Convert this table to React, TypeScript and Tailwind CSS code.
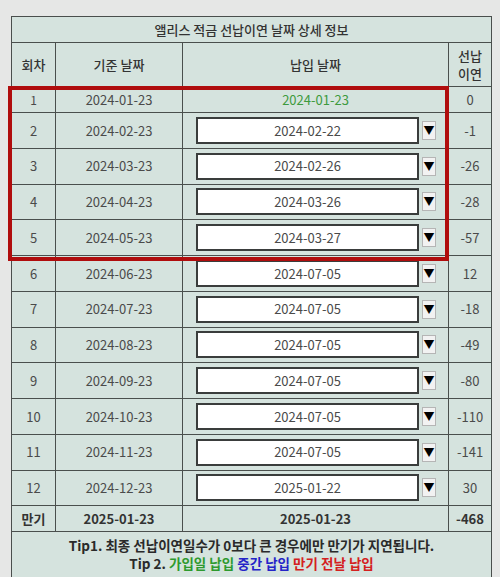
import React from "react";

const rows: [number, string, string, string][] = [
  [2, "2024-02-23", "2024-02-22", "-1"],
  [3, "2024-03-23", "2024-02-26", "-26"],
  [4, "2024-04-23", "2024-03-26", "-28"],
  [5, "2024-05-23", "2024-03-27", "-57"],
  [6, "2024-06-23", "2024-07-05", "12"],
  [7, "2024-07-23", "2024-07-05", "-18"],
  [8, "2024-08-23", "2024-07-05", "-49"],
  [9, "2024-09-23", "2024-07-05", "-80"],
  [10, "2024-10-23", "2024-07-05", "-110"],
  [11, "2024-11-23", "2024-07-05", "-141"],
  [12, "2024-12-23", "2025-01-22", "30"],
];

const cell = "border border-[#4a4f4d] text-center p-0";

export default function App() {
  return (
    <div
      className="w-[500px] h-[577px] bg-[#e6e7e6] pt-[16px] pl-[11px] overflow-hidden text-[13px] text-[#4a4a4a]"
      style={{ fontFamily: '"Noto Sans CJK KR", "Noto Sans", sans-serif' }}
    >
      <div className="relative w-[480px]">
        <table className="border-collapse bg-[#d5e3de] w-[480px] table-fixed">
          <colgroup>
            <col className="w-[44px]" />
            <col className="w-[127px]" />
            <col className="w-[266px]" />
            <col className="w-[43px]" />
          </colgroup>
          <tbody>
            <tr className="h-[26px]">
              <td colSpan={4} className={`${cell} text-[#333] font-medium`}>
                앨리스 적금 선납이연 날짜 상세 정보
              </td>
            </tr>
            <tr className="h-[44px]">
              <td className={`${cell} text-[#333] font-medium`}>회차</td>
              <td className={`${cell} text-[#333] font-medium`}>기준 날짜</td>
              <td className={`${cell} text-[#333] font-medium`}>납입 날짜</td>
              <td className={`${cell} text-[#333] font-medium leading-[18px]`}>
                선납
                <br />
                이연
              </td>
            </tr>
            <tr className="h-[26px]">
              <td className={`${cell} text-[12px]`}>1</td>
              <td className={cell}>2024-01-23</td>
              <td className={`${cell} text-[#3d9a3d]`}>2024-01-23</td>
              <td className={cell}>0</td>
            </tr>
            {rows.map(([n, base, pay, diff]) => (
              <tr key={n} className="h-[35.75px]">
                <td className={cell}>{n}</td>
                <td className={cell}>{base}</td>
                <td className={cell}>
                  <div className="flex items-center justify-center gap-[3px] pl-[1px]">
                    <div className="w-[223px] h-[27px] bg-white border-2 border-[#3a3d3c] flex items-center justify-center text-[#4a4a4a]">
                      {pay}
                    </div>
                    <div className="w-[14px] h-[19px] bg-[#f2f2f2] border border-[#b5b5b5] flex items-center justify-center text-[11px] text-black leading-none">
                      ▼
                    </div>
                  </div>
                </td>
                <td className={cell}>{diff}</td>
              </tr>
            ))}
            <tr className="h-[26px] font-bold text-[#333]">
              <td className={cell}>만기</td>
              <td className={cell}>2025-01-23</td>
              <td className={cell}>2025-01-23</td>
              <td className={cell}>-468</td>
            </tr>
            <tr className="h-[50px]">
              <td colSpan={4} className={`${cell} font-bold text-[#2a2a2a] text-[13.5px] leading-[18px] align-top pt-[4px]`}>
                <div>Tip1. 최종 선납이연일수가 0보다 큰 경우에만 만기가 지연됩니다.</div>
                <div>
                  Tip 2. <span className="text-[#2e9a2e]">가입일 납입</span>{" "}
                  <span className="text-[#2424c8]">중간 납입</span>{" "}
                  <span className="text-[#d42020]">만기 전날 납입</span>
                </div>
              </td>
            </tr>
          </tbody>
        </table>
        <div className="absolute left-[-3px] top-[70px] w-[441px] h-[175px] border-4 border-[#b00d0d] pointer-events-none" />
      </div>
    </div>
  );
}
